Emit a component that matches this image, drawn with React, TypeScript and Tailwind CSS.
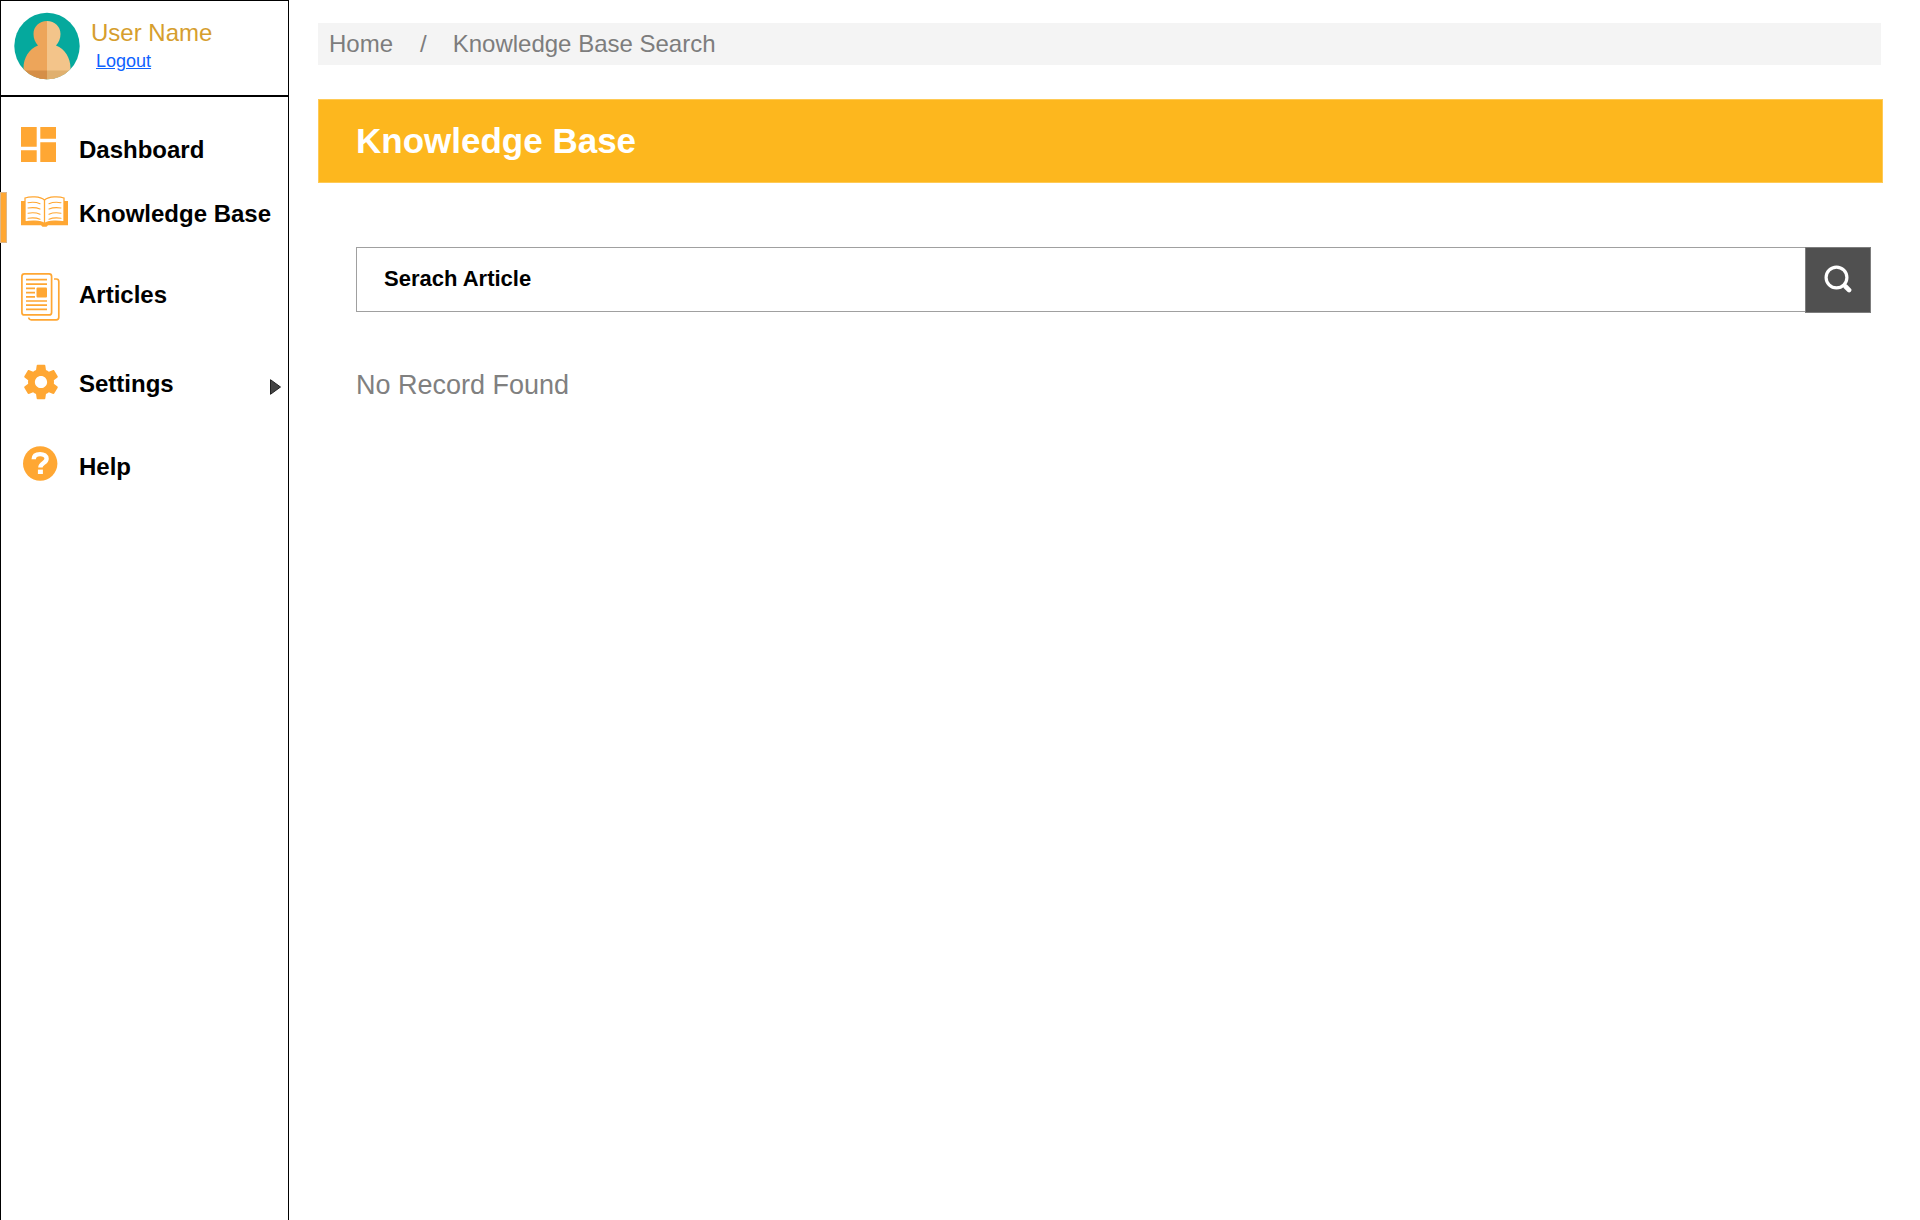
import type { ReactNode } from "react";

function Avatar() {
  return (
    <svg width="66" height="68" viewBox="0 0 66 68" role="img" aria-label="User avatar">
      <defs>
        <clipPath id="avatar-clip">
          <ellipse cx="33" cy="34" rx="32.7" ry="33.3" />
        </clipPath>
      </defs>
      <g clipPath="url(#avatar-clip)">
        <rect width="66" height="68" fill="#05a99d" />
        <path d="M33 9c-7.800 0-13.500 5.600-13.500 13 0 4.500 1.600 8.500 4.500 11.500C15 37 9.500 46 9.500 56v12H33z" fill="#eda55a" />
        <path d="M33 9c7.800 0 13.500 5.600 13.500 13 0 4.500-1.600 8.500-4.500 11.500C51 37 56.500 46 56.500 56v12H33z" fill="#f3c48a" />
        <path d="M9 58.500h24V68H9z" fill="#d58f48" />
        <path d="M33 58.500h24V68H33z" fill="#e0b06f" />
      </g>
    </svg>
  );
}

function DashboardIcon() {
  return (
    <svg width="35" height="35" viewBox="0 0 35 35" fill="#ffa733" aria-hidden="true">
      <path d="M0 0h15.700v19.700H0zM19.300 0H35v11.700H19.300zM0 23.300h15.700V35H0zM19.300 15.300H35V35H19.300z" />
    </svg>
  );
}

function BookIcon() {
  return (
    <svg width="47" height="31" viewBox="0 0 47 31" fill="none" stroke="#ffa733" aria-hidden="true">
      <path d="M0 5h47v24.200H27l-1.500 1.500h-4L20 29.200H0z" fill="#ffa733" stroke="none" />
      <path
        d="M23.500 4C19 .2 9 .2 4 2v24c6-1.400 15-1.400 19.500 1.600C28 24.600 37 24.600 43 26V2C38 .2 28 .2 23.500 4z"
        fill="#fff"
        strokeWidth="1.300"
      />
      <path d="M23.500 4v24" strokeWidth="1.300" />
      <path
        d="M7 6.700c4-.7 8.500-.5 12 1M7 12c4-.7 8.500-.5 12 1M7 17.200c4-.7 8.500-.5 12 1M7 22.300c4-.7 8.500-.5 12 1M40 6.700c-4-.7-8.500-.5-12 1M40 12c-4-.7-8.500-.5-12 1M40 17.200c-4-.7-8.500-.5-12 1M40 22.300c-4-.7-8.500-.5-12 1"
        strokeWidth="1.100"
        strokeLinecap="round"
      />
    </svg>
  );
}

function ArticlesIcon() {
  return (
    <svg width="39" height="48" viewBox="0 0 39 48" fill="none" stroke="#ffa733" strokeWidth="1.700" aria-hidden="true">
      <rect x=".9" y=".9" width="29.700" height="41" rx="2.500" />
      <path d="M33 6h2.300q2.500 0 2.500 2.500v35.800q0 2.500-2.500 2.500H10.200q-2.200 0-2.500-2.300" />
      <path d="M5 6.700h21M5 11.200h21M5 15.400h9M5 19.600h9M5 23.800h9M5 28h21M5 32.200h21M5 36.400h21" />
      <rect x="15.500" y="14.500" width="10.500" height="10" rx="1" fill="#ffa733" stroke="none" />
    </svg>
  );
}

function GearIcon() {
  return (
    <svg width="36" height="36" viewBox="2.250 2 19.500 20" fill="#ffa733" aria-hidden="true">
      <path d="M19.140 12.940c.04-.3.06-.61.06-.94 0-.32-.02-.64-.07-.94l2.030-1.580c.18-.14.23-.41.12-.61l-1.920-3.320c-.12-.22-.37-.29-.59-.22l-2.390.96c-.5-.38-1.030-.7-1.620-.94l-.36-2.540c-.04-.24-.24-.41-.48-.41h-3.840c-.24 0-.43.17-.47.41l-.36 2.540c-.59.24-1.130.57-1.620.94l-2.390-.96c-.22-.08-.47 0-.59.22L2.740 8.870c-.12.21-.08.47.12.61l2.030 1.580c-.05.3-.09.63-.09.94s.02.64.07.94l-2.030 1.580c-.18.14-.23.41-.12.61l1.920 3.320c.12.22.37.29.59.22l2.390-.96c.5.38 1.030.7 1.620.94l.36 2.540c.05.24.24.41.48.41h3.840c.24 0 .44-.17.47-.41l.36-2.540c.59-.24 1.130-.56 1.620-.94l2.390.96c.22.08.47 0 .59-.22l1.920-3.320c.12-.22.07-.47-.12-.61l-2.010-1.580zM12 15.400c-1.880 0-3.400-1.520-3.400-3.400s1.520-3.400 3.400-3.400 3.400 1.520 3.400 3.400-1.520 3.400-3.400 3.400z" />
    </svg>
  );
}

function HelpIcon() {
  return (
    <svg width="35" height="35" viewBox="0 0 35 35" aria-hidden="true">
      <circle cx="17.200" cy="17.500" r="17.200" fill="#ffa733" />
      <path d="M10.700 13.300c0-3.600 2.600-5.200 6.400-5.200s6.500 1.800 6.500 4.700c0 4.300-6.200 4.200-6.200 8.700" fill="none" stroke="#fff" strokeWidth="4.400" />
      <path d="M14.900 23.600h5v4.400h-5z" fill="#fff" />
    </svg>
  );
}

type NavItemProps = {
  label: string;
  icon: ReactNode;
  row: string;
  iconBox?: string;
  active?: boolean;
  expandable?: boolean;
};

function NavItem({ label, icon, row, iconBox = "", active, expandable }: NavItemProps) {
  return (
    <li>
      <a href="#" aria-current={active ? "page" : undefined} className={`relative flex items-center pl-5 pr-[7px] ${row}`}>
        {active && <span className="absolute top-2.5 -left-px h-[51px] w-[7px] border border-[#dcb78a] bg-[#ffa733]" />}
        <span className={`w-[58px] shrink-0 ${iconBox}`}>{icon}</span>
        <span className="whitespace-nowrap text-[24px] leading-7 font-bold text-black">{label}</span>
        {expandable && (
          <svg width="11" height="16" viewBox="0 0 11 16" className="mt-1.5 ml-auto" aria-hidden="true">
            <path d="M.5.700v14.600L10.500 8z" fill="#444" stroke="#222" />
          </svg>
        )}
      </a>
    </li>
  );
}

export default function App() {
  return (
    <div className="flex min-h-screen bg-white font-['Liberation_Sans',Arial,sans-serif]">
      <aside className="w-[289px] shrink-0 border-t border-r border-l border-black">
        <div className="flex h-24 items-start border-b-2 border-black pl-[13px] pt-[11px]">
          <Avatar />
          <div className="ml-[11px] flex flex-col items-start gap-0.5 pt-[7px]">
            <span className="text-[24px] leading-7 text-[#d69e2e]">User Name</span>
            <a href="#" className="ml-[5px] text-[18px] leading-6 text-[#0f62fe] underline">
              Logout
            </a>
          </div>
        </div>
        <nav aria-label="Main">
          <ul className="pt-[21px]">
            <NavItem label="Dashboard" icon={<DashboardIcon />} row="h-16" iconBox="pb-3" />
            <NavItem label="Knowledge Base" icon={<BookIcon />} row="h-16" iconBox="pb-1.5" active />
            <NavItem label="Articles" icon={<ArticlesIcon />} row="h-[98px]" iconBox="pt-1" />
            <NavItem label="Settings" icon={<GearIcon />} row="h-20" iconBox="pl-0.5 pb-1" expandable />
            <NavItem label="Help" icon={<HelpIcon />} row="h-[86px]" iconBox="pl-0.5 pb-2" />
          </ul>
        </nav>
      </aside>

      <main className="min-w-0 flex-1 pt-[23px] pr-[37px] pl-[29px]">
        <nav aria-label="Breadcrumb" className="mr-0.5 flex h-[42px] items-center bg-[#f4f4f4] pl-[11px] text-[24px] leading-7 text-[#7d7d7d]">
          <a href="#">Home</a>
          <span className="mr-[26px] ml-[27px]">/</span>
          <span>Knowledge Base Search</span>
        </nav>

        <h1 className="mt-[34px] flex h-[84px] items-center border border-[#ffca55] bg-[#fdb71e] pl-[37px] text-[35px] leading-10 font-bold text-white">
          Knowledge Base
        </h1>

        <form className="mt-16 mr-3 ml-[38px] flex h-[66px]" onSubmit={(e) => e.preventDefault()}>
          <input
            type="text"
            aria-label="Search article"
            placeholder="Serach Article"
            className="mb-px min-w-0 flex-1 border border-r-0 border-[#a0a0a0] pb-0.5 pl-[27px] text-[22px] font-bold text-black outline-none placeholder:text-black placeholder:opacity-100"
          />
          <button type="submit" aria-label="Search" className="flex w-[66px] items-center justify-center border border-[#7d7d7d] bg-[#505050] pr-px pb-0.5">
            <svg width="28" height="28" viewBox="0 0 28 28" fill="none" stroke="#fff" strokeLinecap="round" aria-hidden="true">
              <circle cx="12.500" cy="12.500" r="10.400" strokeWidth="3.200" />
              <path d="M20.200 20.200l.6.6" strokeWidth="3" />
              <path d="M21.500 21.500l3.600 3.600" strokeWidth="4.600" />
            </svg>
          </button>
        </form>

        <p className="mt-14 ml-[38px] text-[27px] leading-8 text-[#808080]">No Record Found</p>
      </main>
    </div>
  );
}
